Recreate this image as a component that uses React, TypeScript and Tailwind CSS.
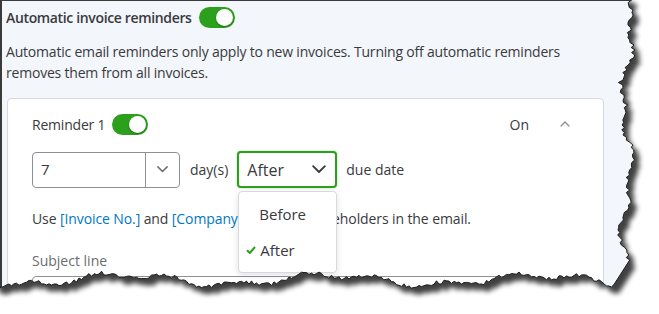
import React from "react";

function makeRng(seed: number) {
  let s = seed;
  return () => {
    s = (s * 16807) % 2147483647;
    return (s - 1) / 2147483646;
  };
}

function buildPaper(): string {
  const r = makeRng(12345);
  const pts: [number, number][] = [];
  pts.push([-10, -10]);
  for (let y = -5; y <= 262; y += 2.5) {
    const x = 627 + 5 * Math.sin(y / 21) + 3 * Math.sin(y / 8 + 1) + (r() - 0.5) * 5;
    pts.push([x, y]);
  }
  for (let x = 614; x >= -8; x -= 2.5) {
    const y = 280 + 5 * Math.sin(x / 33 + 1) + 3 * Math.sin(x / 11 + 2) + (r() - 0.5) * 4;
    pts.push([x, y]);
  }
  pts.push([-10, 272]);
  return "M" + pts.map((p) => `${p[0].toFixed(1)},${p[1].toFixed(1)}`).join(" L") + " Z";
}

const PAPER = buildPaper();

function Toggle() {
  return (
    <div className="relative w-[36px] h-[21px] rounded-full bg-[#2ca01c] shrink-0">
      <div className="absolute right-[2px] top-[2px] w-[17px] h-[17px] rounded-full bg-white shadow-[0_1px_2px_rgba(0,0,0,0.35)]" />
    </div>
  );
}

function ChevronDown({ w, color, sw }: { w: number; color: string; sw: number }) {
  return (
    <svg width={w} height={w * 0.6} viewBox="0 0 10 6" fill="none">
      <path d="M0.8 0.8 L5 5 L9.2 0.8" stroke={color} strokeWidth={sw} strokeLinecap="round" strokeLinejoin="round" />
    </svg>
  );
}

export default function App() {
  return (
    <div className="relative w-[659px] h-[314px] overflow-hidden bg-white" style={{ fontFamily: "'Open Sans', 'Noto Sans', sans-serif" }}>
      <div className="w-full h-full bg-[#f3f6fa] border-t border-l-2 border-[#3a3a3a] pl-[4px] pt-[5px] text-[#393a3d]">
        <div className="flex items-center gap-[7px] h-[22px]">
          <span className="text-[14px] font-semibold tracking-[-0.35px]">Automatic invoice reminders</span>
          <Toggle />
        </div>
        <div className="mt-[13px] text-[14px] leading-[21px] w-[600px] tracking-[-0.2px]">
          Automatic email reminders only apply to new invoices. Turning off automatic reminders removes them from all invoices.
        </div>
        <div className="mt-[15px] ml-[1px] w-[597px] h-[240px] rounded-[4px] border border-[#d6d9de] bg-white pl-[24px] pr-[26px] pt-[14px]">
          <div className="flex items-center h-[22px]">
            <span className="text-[14px] mr-[7px] tracking-[-0.2px]">Reminder 1</span>
            <Toggle />
            <div className="flex-1" />
            <span className="text-[14px] mr-[31px]">On</span>
            <svg width="10" height="6" viewBox="0 0 10 6" fill="none" className="mr-[7px]">
              <path d="M1 5 L5 1 L9 5" stroke="#8d9096" strokeWidth="1.3" strokeLinecap="round" />
            </svg>
          </div>
          <div className="flex items-center mt-[16px] text-[14px]">
            <div className="flex w-[148px] h-[36px] border border-[#8d9096] rounded-[4px] bg-white">
              <div className="flex-1 flex items-center pl-[8px] text-[15px]">7</div>
              <div className="w-[34px] border-l border-[#8d9096] flex items-center justify-center">
                <ChevronDown w={11} color="#6b6c72" sw={1.3} />
              </div>
            </div>
            <span className="ml-[10px] text-[#393a3d]">day(s)</span>
            <div className="relative ml-[9px]">
              <div className="flex items-center w-[100px] h-[37px] border-2 border-[#2ca01c] rounded-[4px] bg-white pl-[8px] pr-[9px] shadow-[0_0_2px_rgba(44,160,28,0.5)]">
                <span className="flex-1 text-[16px]">After</span>
                <ChevronDown w={14} color="#393a3d" sw={1.3} />
              </div>
              <div className="absolute left-[1px] top-[40px] w-[99px] h-[82px] bg-white border border-[#d6d9de] rounded-[4px] shadow-[0_2px_6px_rgba(0,0,0,0.12)] z-10 text-[15px]">
                <div className="h-[36px] mt-[4px] flex items-center pl-[20px]">Before</div>
                <div className="h-[36px] flex items-center pl-[7px]">
                  <svg width="10" height="8" viewBox="0 0 10 8" className="mr-[4px]">
                    <path d="M1 4.2 L3.8 7 L9 1" stroke="#2ca01c" strokeWidth="2" fill="none" />
                  </svg>
                  After
                </div>
              </div>
            </div>
            <span className="ml-[9px]">due date</span>
          </div>
          <div className="mt-[20px] text-[14px] leading-[21px] tracking-[-0.1px]">
            Use <span className="text-[#0077c5]">[Invoice No.]</span> and <span className="text-[#0077c5]">[Company Name]</span> as placeholders in the email.
          </div>
          <div className="mt-[21px] text-[14px] leading-[21px] text-[#6b6c72]">Subject line</div>
          <div className="mt-[5px] w-[498px] h-[36px] border border-[#8d9096] rounded-[4px]" />
        </div>
      </div>
      <svg className="absolute inset-0 pointer-events-none z-20" width="659" height="314" viewBox="0 0 659 314">
        <defs>
          <filter id="blr" x="-10%" y="-10%" width="120%" height="120%">
            <feGaussianBlur stdDeviation="2.5" />
          </filter>
          <mask id="outside">
            <rect x="0" y="0" width="659" height="314" fill="white" />
            <path d={PAPER} fill="black" />
          </mask>
        </defs>
        <path d={"M-20,-20 H700 V340 H-20 Z " + PAPER} fill="white" fillRule="evenodd" />
        <g mask="url(#outside)">
          <path d={PAPER} transform="translate(6,7)" fill="#000" opacity="0.75" filter="url(#blr)" />
        </g>
        <path d={PAPER} fill="none" stroke="#1e1e1e" strokeWidth="1" />
      </svg>
    </div>
  );
}
